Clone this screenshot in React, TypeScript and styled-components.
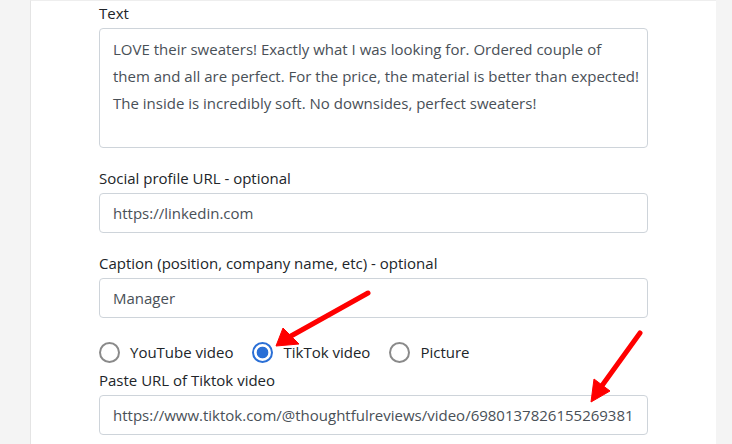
import React from 'react';
import styled, { createGlobalStyle } from 'styled-components';

const GlobalStyle = createGlobalStyle`
  body {
    margin: 0;
    background: #f4f4f4;
    font-family: "Open Sans", "Noto Sans", sans-serif;
    color: #212529;
  }
`;

const Page = styled.div`
  position: relative;
  min-height: 444px;
  padding-left: 30px;
  overflow: hidden;
`;

const Panel = styled.div`
  width: 549px;
  min-height: 444px;
  background: #ffffff;
  border-left: 1px solid #e4e4e4;
  border-top: 1px solid #eeeeee;
  padding: 0 68px;
`;

const FormGroup = styled.div`
  margin-bottom: 18px;
`;

const Label = styled.label`
  display: block;
  font-size: 15px;
  line-height: 24px;
  margin-bottom: 3px;
`;

const TextArea = styled.textarea`
  display: block;
  box-sizing: border-box;
  width: 100%;
  height: 120px;
  padding: 7px 13px;
  border: 1px solid #ced4da;
  border-radius: 4px;
  font-family: inherit;
  font-size: 15px;
  line-height: 27px;
  color: #495057;
  resize: none;
  white-space: pre;
  overflow: hidden;
`;

const Input = styled.input`
  display: block;
  box-sizing: border-box;
  width: 100%;
  height: 40px;
  padding: 0 13px;
  border: 1px solid #ced4da;
  border-radius: 4px;
  font-family: inherit;
  font-size: 15px;
  color: #495057;
  outline: none;
`;

const RadioRow = styled.div`
  display: flex;
  align-items: center;
  gap: 19px;
  margin-top: 22px;
  margin-bottom: 4px;
  height: 24px;
`;

const RadioOption = styled.label`
  display: flex;
  align-items: center;
  gap: 10px;
  font-size: 15px;
  line-height: 24px;
  color: #212529;
`;

const Radio = styled.input`
  appearance: none;
  box-sizing: border-box;
  width: 21px;
  height: 21px;
  margin: 0;
  border: 2px solid #8a8a8a;
  border-radius: 50%;
  background: #fff;

  &:checked {
    border-color: #2a6fd6;
    background: radial-gradient(circle, #2a6fd6 0 5.5px, #fff 6.2px);
  }
`;

const Arrows = styled.svg`
  position: absolute;
  top: 0;
  left: 0;
  pointer-events: none;
`;

const review = [
  'LOVE their sweaters! Exactly what I was looking for. Ordered couple of',
  'them and all are perfect. For the price, the material is better than expected!',
  'The inside is incredibly soft. No downsides, perfect sweaters!',
].join('\n');

export default function App() {
  return (
    <>
      <GlobalStyle />
      <Page>
        <Panel>
          <FormGroup>
            <Label>Text</Label>
            <TextArea defaultValue={review} />
          </FormGroup>
          <FormGroup>
            <Label>Social profile URL - optional</Label>
            <Input defaultValue="https://linkedin.com" />
          </FormGroup>
          <FormGroup>
            <Label>Caption (position, company name, etc) - optional</Label>
            <Input defaultValue="Manager" />
          </FormGroup>
          <RadioRow>
            <RadioOption>
              <Radio type="radio" name="media" />
              YouTube video
            </RadioOption>
            <RadioOption>
              <Radio type="radio" name="media" defaultChecked />
              TikTok video
            </RadioOption>
            <RadioOption>
              <Radio type="radio" name="media" />
              Picture
            </RadioOption>
          </RadioRow>
          <FormGroup>
            <Label>Paste URL of Tiktok video</Label>
            <Input defaultValue="https://www.tiktok.com/@thoughtfulreviews/video/6980137826155269381" />
          </FormGroup>
        </Panel>
        <Arrows width="732" height="444" viewBox="0 0 732 444">
          <g fill="#ff0000" stroke="#ff0000">
            <line x1="368" y1="293" x2="291" y2="336" strokeWidth="5" strokeLinecap="round" />
            <polygon points="276,346 283,328 299,344" strokeWidth="1" strokeLinejoin="round" />
            <line x1="640" y1="333" x2="601" y2="387" strokeWidth="5" strokeLinecap="round" />
            <polygon points="591,402 594,379 610,391" strokeWidth="1" strokeLinejoin="round" />
          </g>
        </Arrows>
      </Page>
    </>
  );
}
